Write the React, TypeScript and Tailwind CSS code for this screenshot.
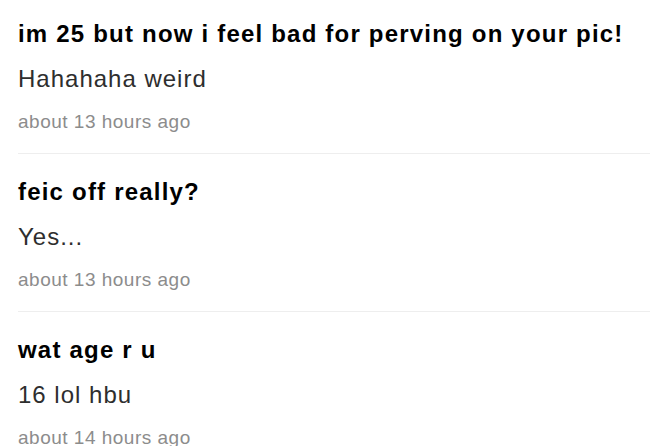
import React from 'react';

type Message = {
  id: number;
  subject: string;
  body: string;
  time: string;
};

const messages: Message[] = [
  { id: 1, subject: 'im 25 but now i feel bad for perving on your pic!', body: 'Hahahaha weird', time: 'about 13 hours ago' },
  { id: 2, subject: 'feic off really?', body: 'Yes...', time: 'about 13 hours ago' },
  { id: 3, subject: 'wat age r u', body: '16 lol hbu', time: 'about 14 hours ago' },
];

export default function App() {
  return (
    <div className="w-[650px] h-[446px] overflow-hidden bg-white font-['Liberation_Sans',Arial,sans-serif]">
      <ul className="ml-[18px]">
        {messages.map(msg => (
          <li key={msg.id} className="pt-[24px] first:pt-[20px] pb-[19px] border-b border-[#eeeeee]">
            <h3 className="text-[24px] leading-[28px] font-bold tracking-[1.2px] text-black">{msg.subject}</h3>
            <p className="mt-[17px] text-[24px] leading-[28px] tracking-[1px] text-[#2e2e2e]">{msg.body}</p>
            <p className="mt-[17px] text-[19px] leading-[24px] tracking-[0.5px] text-[#8c8c8c]">{msg.time}</p>
          </li>
        ))}
      </ul>
    </div>
  );
}
